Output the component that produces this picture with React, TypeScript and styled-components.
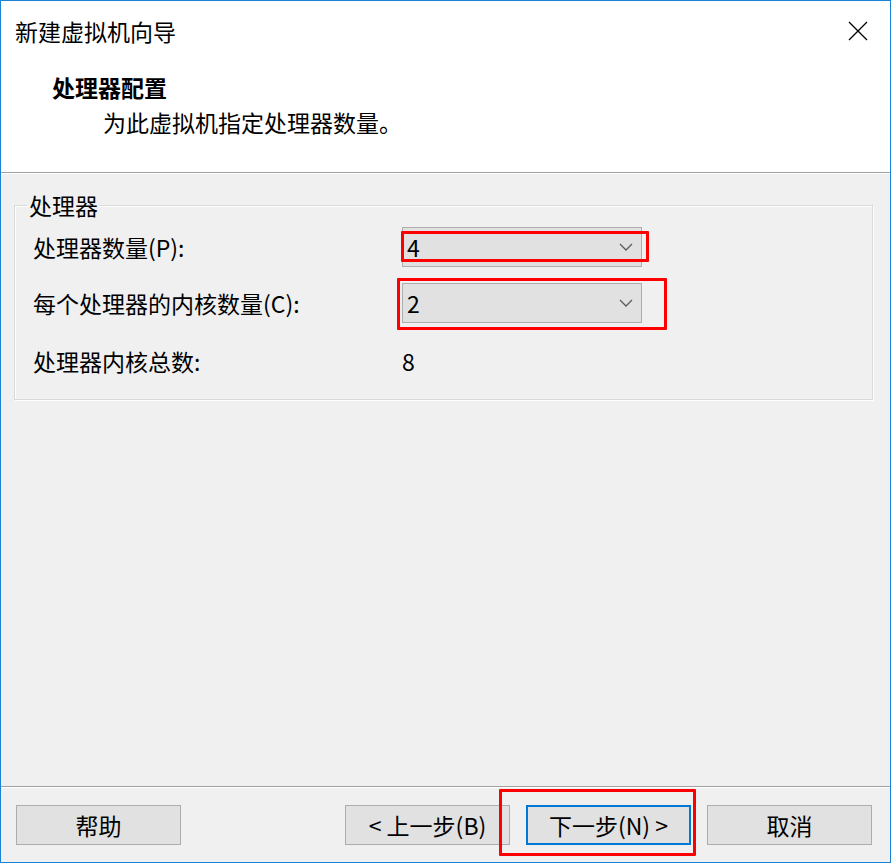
import React from 'react';
import styled, { createGlobalStyle } from 'styled-components';

const GlobalStyle = createGlobalStyle`
  html, body {
    margin: 0;
    padding: 0;
    background: #ffffff;
  }
  body {
    font-family: "Noto Sans CJK SC", "Microsoft YaHei", sans-serif;
  }
`;

const Window = styled.div`
  width: 891px;
  height: 863px;
  box-sizing: border-box;
  border: 1px solid #1883d7;
  display: flex;
  flex-direction: column;
  background: #f0f0f0;
  font-family: "Noto Sans CJK SC", "Microsoft YaHei", sans-serif;
  font-size: 23px;
  color: #000000;
  overflow: hidden;
`;

const TitleBar = styled.div`
  height: 60px;
  flex-shrink: 0;
  background: #ffffff;
  display: flex;
  align-items: center;
  justify-content: space-between;
  padding: 0 22px 0 14px;
`;

const TitleText = styled.span`
  font-size: 23px;
  line-height: 30px;
`;

const CloseButton = styled.div`
  width: 20px;
  height: 20px;
  display: flex;
`;

const Header = styled.div`
  height: 112px;
  flex-shrink: 0;
  box-sizing: border-box;
  background: #ffffff;
  border-bottom: 1px solid #a0a0a0;
  padding-top: 11px;
`;

const HeaderTitle = styled.div`
  font-weight: 700;
  line-height: 30px;
  padding-left: 51px;
`;

const HeaderSubtitle = styled.div`
  line-height: 30px;
  padding-left: 102px;
  margin-top: 5px;
`;

const Content = styled.div`
  flex: 1;
  border-top: 1px solid #ffffff;
  border-bottom: 1px solid #a0a0a0;
  padding: 17px 17px 0 13px;
`;

const GroupBox = styled.fieldset`
  margin: 0;
  border: 1px solid #d9d9d9;
  box-shadow: inset 1px 1px 0 #ffffff, 1px 1px 0 #ffffff;
  padding: 0 12px 8px 12px;
  min-width: 0;
`;

const GroupCaption = styled.legend`
  padding: 0 2px;
  line-height: 28px;
  font-size: 23px;
`;

const Rows = styled.div`
  display: grid;
  grid-template-columns: 369px 240px;
  grid-template-rows: 56px 56px 60px;
  align-items: center;
  padding-left: 6px;
`;

const Label = styled.span`
  line-height: 30px;
  white-space: nowrap;
`;

const Value = styled.span`
  line-height: 30px;
`;

const ComboWrap = styled.div`
  position: relative;
  width: 240px;
  height: 40px;
`;

const Combo = styled.div`
  width: 100%;
  height: 100%;
  box-sizing: border-box;
  background: #e1e1e1;
  border: 1px solid #adadad;
  display: flex;
  align-items: center;
  justify-content: space-between;
  padding: 0 8px 0 4px;
  line-height: 1;
`;

const Annotation = styled.div<{ $top: number; $left: number; $w: number; $h: number }>`
  position: absolute;
  top: ${p => p.$top}px;
  left: ${p => p.$left}px;
  width: ${p => p.$w}px;
  height: ${p => p.$h}px;
  box-sizing: border-box;
  border: 3px solid #ff0000;
  border-radius: 1px;
  pointer-events: none;
`;

const Footer = styled.div`
  flex-shrink: 0;
  border-top: 1px solid #ffffff;
  display: flex;
  align-items: center;
  gap: 16px;
  padding: 17px 18px 17px 15px;
`;

const Spacer = styled.div`
  flex: 1;
`;

const ButtonWrap = styled.div`
  position: relative;
`;

const Button = styled.button<{ $default?: boolean }>`
  width: 165px;
  height: 40px;
  box-sizing: border-box;
  background: #e1e1e1;
  border: ${p => (p.$default ? '2px solid #0078d7' : '1px solid #adadad')};
  font-family: inherit;
  font-size: 23px;
  color: #000000;
  padding: 0;
  line-height: 1;
  display: flex;
  align-items: center;
  justify-content: center;
`;

const Chevron = () => (
  <svg width="14" height="8" viewBox="0 0 14 8">
    <path d="M1 1 L7 7 L13 1" fill="none" stroke="#5a5a5a" strokeWidth="1.3" />
  </svg>
);

const CloseIcon = () => (
  <svg width="20" height="20" viewBox="0 0 20 20">
    <path d="M1 1 L19 19 M19 1 L1 19" stroke="#000000" strokeWidth="1.3" fill="none" />
  </svg>
);

export default function App() {
  return (
    <>
      <GlobalStyle />
      <Window>
        <TitleBar>
          <TitleText>新建虚拟机向导</TitleText>
          <CloseButton>
            <CloseIcon />
          </CloseButton>
        </TitleBar>
        <Header>
          <HeaderTitle>处理器配置</HeaderTitle>
          <HeaderSubtitle>为此虚拟机指定处理器数量。</HeaderSubtitle>
        </Header>
        <Content>
          <GroupBox>
            <GroupCaption>处理器</GroupCaption>
            <Rows>
              <Label>处理器数量(P):</Label>
              <ComboWrap>
                <Combo>
                  <span>4</span>
                  <Chevron />
                </Combo>
                <Annotation $top={4} $left={-1} $w={248} $h={31} />
              </ComboWrap>
              <Label>每个处理器的内核数量(C):</Label>
              <ComboWrap>
                <Combo>
                  <span>2</span>
                  <Chevron />
                </Combo>
                <Annotation $top={-5} $left={-5} $w={270} $h={52} />
              </ComboWrap>
              <Label>处理器内核总数:</Label>
              <Value>8</Value>
            </Rows>
          </GroupBox>
        </Content>
        <Footer>
          <Button>帮助</Button>
          <Spacer />
          <Button>&lt; 上一步(B)</Button>
          <ButtonWrap>
            <Button $default>下一步(N) &gt;</Button>
            <Annotation $top={-16} $left={-27} $w={197} $h={67} />
          </ButtonWrap>
          <Button>取消</Button>
        </Footer>
      </Window>
    </>
  );
}
